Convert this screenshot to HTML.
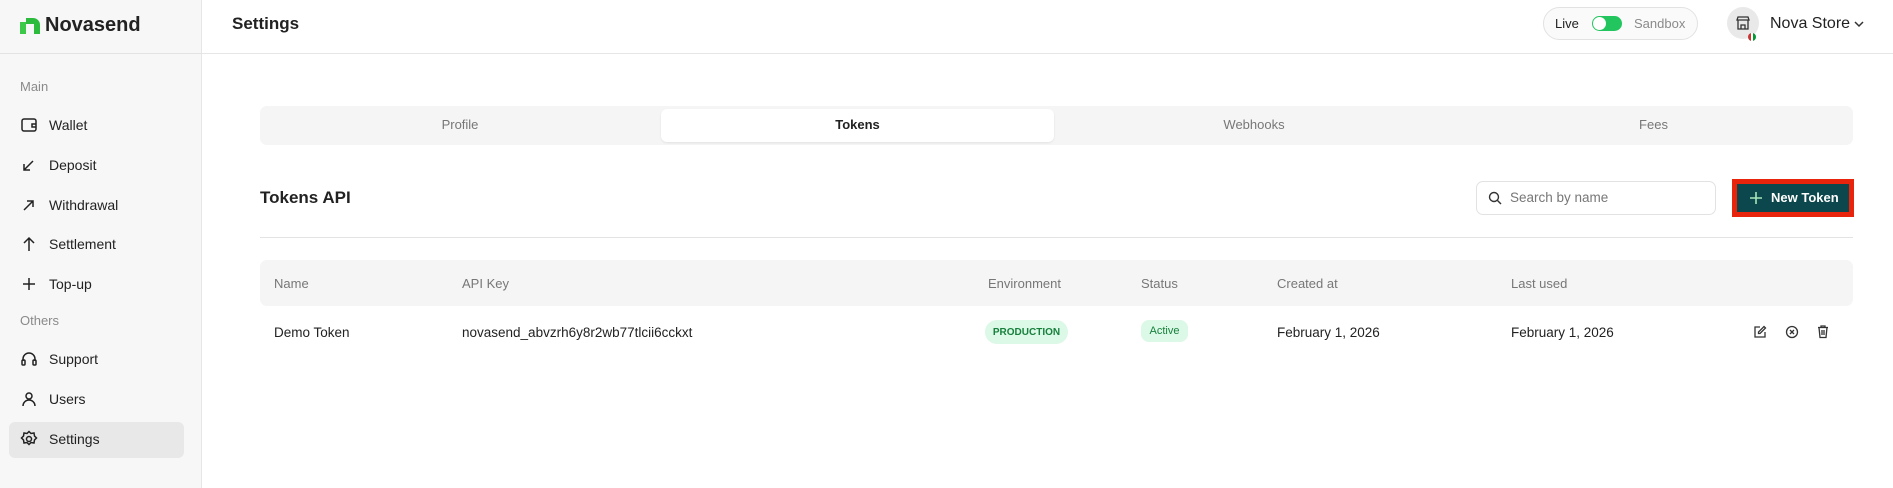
<!DOCTYPE html>
<html><head><meta charset="utf-8"><style>
*{box-sizing:border-box;margin:0;padding:0}
body{width:1893px;height:488px;background:#fff;font-family:"Liberation Sans",sans-serif;color:#1a1a1a;position:relative;overflow:hidden}
.a{position:absolute}
.side{left:0;top:0;width:202px;height:488px;background:#f7f7f7;border-right:1px solid #e6e6e6}
.hdr{left:202px;top:0;right:0;height:54px;border-bottom:1px solid #e6e6e6}
.sline{left:0;top:53px;width:202px;border-top:1px solid #e3e3e3}
.lbl{left:20px;font-size:13px;color:#8a8a8a}
.it{left:49px;font-size:14px;color:#222}
.ic{left:20px;width:18px;height:18px}
.th{top:276px;font-size:13px;color:#777}
.td{top:325px;font-size:13.5px;color:#222}
</style></head><body>
<div class="a side"></div>
<div class="a sline"></div>
<div class="a hdr"></div>
<svg class="a" style="left:20px;top:16px" width="20" height="18" viewBox="0 0 20 18"><path d="M0 6h6v12H0z" fill="#3cc94a"/><path d="M6 2h7a7 7 0 0 1 7 7v9h-6V8H6z" fill="#2dbb3e"/></svg>
<div class="a" style="left:45px;top:14px;font-size:20px;font-weight:bold;color:#222">Novasend</div>
<div class="a" style="left:232px;top:14px;font-size:17px;font-weight:bold;color:#222">Settings</div>
<div class="a lbl" style="top:79px">Main</div>
<div class="a lbl" style="top:313px">Others</div>
<div class="a" style="left:9px;top:422px;width:175px;height:36px;background:#e8e8e8;border-radius:6px"></div>
<svg class="a ic" style="top:116px" viewBox="0 0 18 18" fill="none" stroke="#222" stroke-width="1.5"><rect x="2" y="3" width="14" height="12" rx="2"/><path d="M16 8h-4v3h4"/></svg>
<div class="a it" style="top:117px">Wallet</div>
<svg class="a ic" style="top:156px" viewBox="0 0 18 18" fill="none" stroke="#222" stroke-width="1.5"><path d="M13 5L4 14M4 8v6h6"/></svg>
<div class="a it" style="top:157px">Deposit</div>
<svg class="a ic" style="top:196px" viewBox="0 0 18 18" fill="none" stroke="#222" stroke-width="1.5"><path d="M4 14L13 5M7 5h6v6"/></svg>
<div class="a it" style="top:197px">Withdrawal</div>
<svg class="a ic" style="top:235px" viewBox="0 0 18 18" fill="none" stroke="#222" stroke-width="1.5"><path d="M9 16V3M4 8l5-5 5 5"/></svg>
<div class="a it" style="top:236px">Settlement</div>
<svg class="a ic" style="top:275px" viewBox="0 0 18 18" fill="none" stroke="#222" stroke-width="1.5"><path d="M9 3v12M3 9h12"/></svg>
<div class="a it" style="top:276px">Top-up</div>
<svg class="a ic" style="top:350px" viewBox="0 0 18 18" fill="none" stroke="#222" stroke-width="1.5"><path d="M3 11V9a6 6 0 0 1 12 0v2"/><rect x="2" y="10" width="3" height="5" rx="1"/><rect x="13" y="10" width="3" height="5" rx="1"/></svg>
<div class="a it" style="top:351px">Support</div>
<svg class="a ic" style="top:390px" viewBox="0 0 18 18" fill="none" stroke="#222" stroke-width="1.5"><circle cx="9" cy="6" r="3"/><path d="M3 16a6 6 0 0 1 12 0"/></svg>
<div class="a it" style="top:391px">Users</div>
<svg class="a ic" style="top:430px" viewBox="0 0 18 18" fill="none" stroke="#222" stroke-width="1.5"><circle cx="9" cy="9" r="2.5"/><path d="M9 1.5l2 2 3 -.5.5 3 2 2-2 2-.5 3-3-.5-2 2-2-2-3 .5-.5-3-2-2 2-2 .5-3 3 .5z"/></svg>
<div class="a it" style="top:431px">Settings</div>

<div class="a" style="left:1543px;top:7px;width:155px;height:33px;border:1px solid #e2e2e2;border-radius:17px;background:#fafafa"></div>
<div class="a" style="left:1555px;top:16px;font-size:13px;color:#222">Live</div>
<div class="a" style="left:1592px;top:16px;width:30px;height:15px;border-radius:8px;background:#22c55e"></div>
<div class="a" style="left:1593px;top:17px;width:13px;height:13px;border-radius:50%;background:#fff"></div>
<div class="a" style="left:1634px;top:16px;font-size:13px;color:#8a8a8a">Sandbox</div>
<div class="a" style="left:1727px;top:7px;width:32px;height:32px;border-radius:50%;background:#e9e9e9"></div>
<svg class="a" style="left:1735px;top:15px" width="16" height="16" viewBox="0 0 16 16" fill="none" stroke="#333" stroke-width="1.3"><path d="M2 5l1-3h10l1 3H2zM3 5v9h10V5M6 14v-4h4v4"/></svg>
<div class="a" style="left:1748px;top:33px;width:8px;height:8px;border-radius:50%;background:linear-gradient(90deg,#c33 0 35%,#fff 35% 65%,#093 65%)"></div>
<div class="a" style="left:1770px;top:15px;font-size:16px;color:#222">Nova Store</div>
<svg class="a" style="left:1853px;top:19px" width="12" height="10" viewBox="0 0 12 10" fill="none" stroke="#333" stroke-width="1.5"><path d="M2 3l4 4 4-4"/></svg>

<div class="a" style="left:260px;top:106px;width:1593px;height:39px;background:#f5f5f5;border-radius:7px"></div>
<div class="a" style="left:661px;top:109px;width:393px;height:33px;background:#fff;border-radius:6px;box-shadow:0 1px 2px rgba(0,0,0,.08)"></div>
<div class="a" style="left:260px;width:400px;top:117px;text-align:center;font-size:13px;color:#777">Profile</div>
<div class="a" style="left:661px;width:393px;top:117px;text-align:center;font-size:13px;font-weight:bold;color:#222">Tokens</div>
<div class="a" style="left:1054px;width:400px;top:117px;text-align:center;font-size:13px;color:#777">Webhooks</div>
<div class="a" style="left:1454px;width:399px;top:117px;text-align:center;font-size:13px;color:#777">Fees</div>

<div class="a" style="left:260px;top:188px;font-size:17px;font-weight:bold;color:#222">Tokens API</div>
<div class="a" style="left:1476px;top:181px;width:240px;height:34px;border:1px solid #e2e2e2;border-radius:7px"></div>
<svg class="a" style="left:1488px;top:191px" width="14" height="14" viewBox="0 0 14 14" fill="none" stroke="#333" stroke-width="1.4"><circle cx="6" cy="6" r="4.5"/><path d="M9.5 9.5L13 13"/></svg>
<div class="a" style="left:1510px;top:190px;font-size:13.5px;color:#777">Search by name</div>
<div class="a" style="left:1732px;top:179px;width:122px;height:38px;background:#e8240c"></div>
<div class="a" style="left:1737px;top:184px;width:112px;height:28px;background:#0b474c"></div>
<svg class="a" style="left:1749px;top:191px" width="14" height="14" viewBox="0 0 14 14" fill="none" stroke="#a8e6b8" stroke-width="1.6"><path d="M7 1v12M1 7h12"/></svg>
<div class="a" style="left:1771px;top:190px;font-size:13px;font-weight:bold;color:#fff">New Token</div>
<div class="a" style="left:260px;top:237px;width:1593px;border-top:1px solid #e3e3e3"></div>

<div class="a" style="left:260px;top:260px;width:1593px;height:46px;background:#f5f5f5;border-radius:7px"></div>
<div class="a th" style="left:274px">Name</div>
<div class="a th" style="left:462px">API Key</div>
<div class="a th" style="left:988px">Environment</div>
<div class="a th" style="left:1141px">Status</div>
<div class="a th" style="left:1277px">Created at</div>
<div class="a th" style="left:1511px">Last used</div>
<div class="a td" style="left:274px">Demo Token</div>
<div class="a td" style="left:462px">novasend_abvzrh6y8r2wb77tlcii6cckxt</div>
<div class="a" style="left:985px;top:320px;width:83px;height:24px;border-radius:12px;background:#dcf8e6;color:#17803d;font-size:10px;font-weight:bold;text-align:center;line-height:25px">PRODUCTION</div>
<div class="a" style="left:1141px;top:320px;width:47px;height:22px;border-radius:8px;background:#dcf8e6;color:#17803d;font-size:11px;text-align:center;line-height:22px">Active</div>
<div class="a td" style="left:1277px">February 1, 2026</div>
<div class="a td" style="left:1511px">February 1, 2026</div>
<svg class="a" style="left:1753px;top:325px" width="14" height="14" viewBox="0 0 14 14" fill="none" stroke="#333" stroke-width="1.3"><path d="M7 2H2v10h10V7"/><path d="M11 1.5l1.5 1.5L7 8.5H5.5V7z"/></svg>
<svg class="a" style="left:1785px;top:325px" width="14" height="14" viewBox="0 0 14 14" fill="none" stroke="#333" stroke-width="1.3"><circle cx="7" cy="7" r="5.5"/><path d="M5 5l4 4M9 5l-4 4"/></svg>
<svg class="a" style="left:1816px;top:324px" width="14" height="15" viewBox="0 0 14 15" fill="none" stroke="#333" stroke-width="1.3"><path d="M2 3.5h10M5 3.5V2h4v1.5M3 3.5l1 10h6l1-10M6 6v5M8 6v5"/></svg>
</body></html>
